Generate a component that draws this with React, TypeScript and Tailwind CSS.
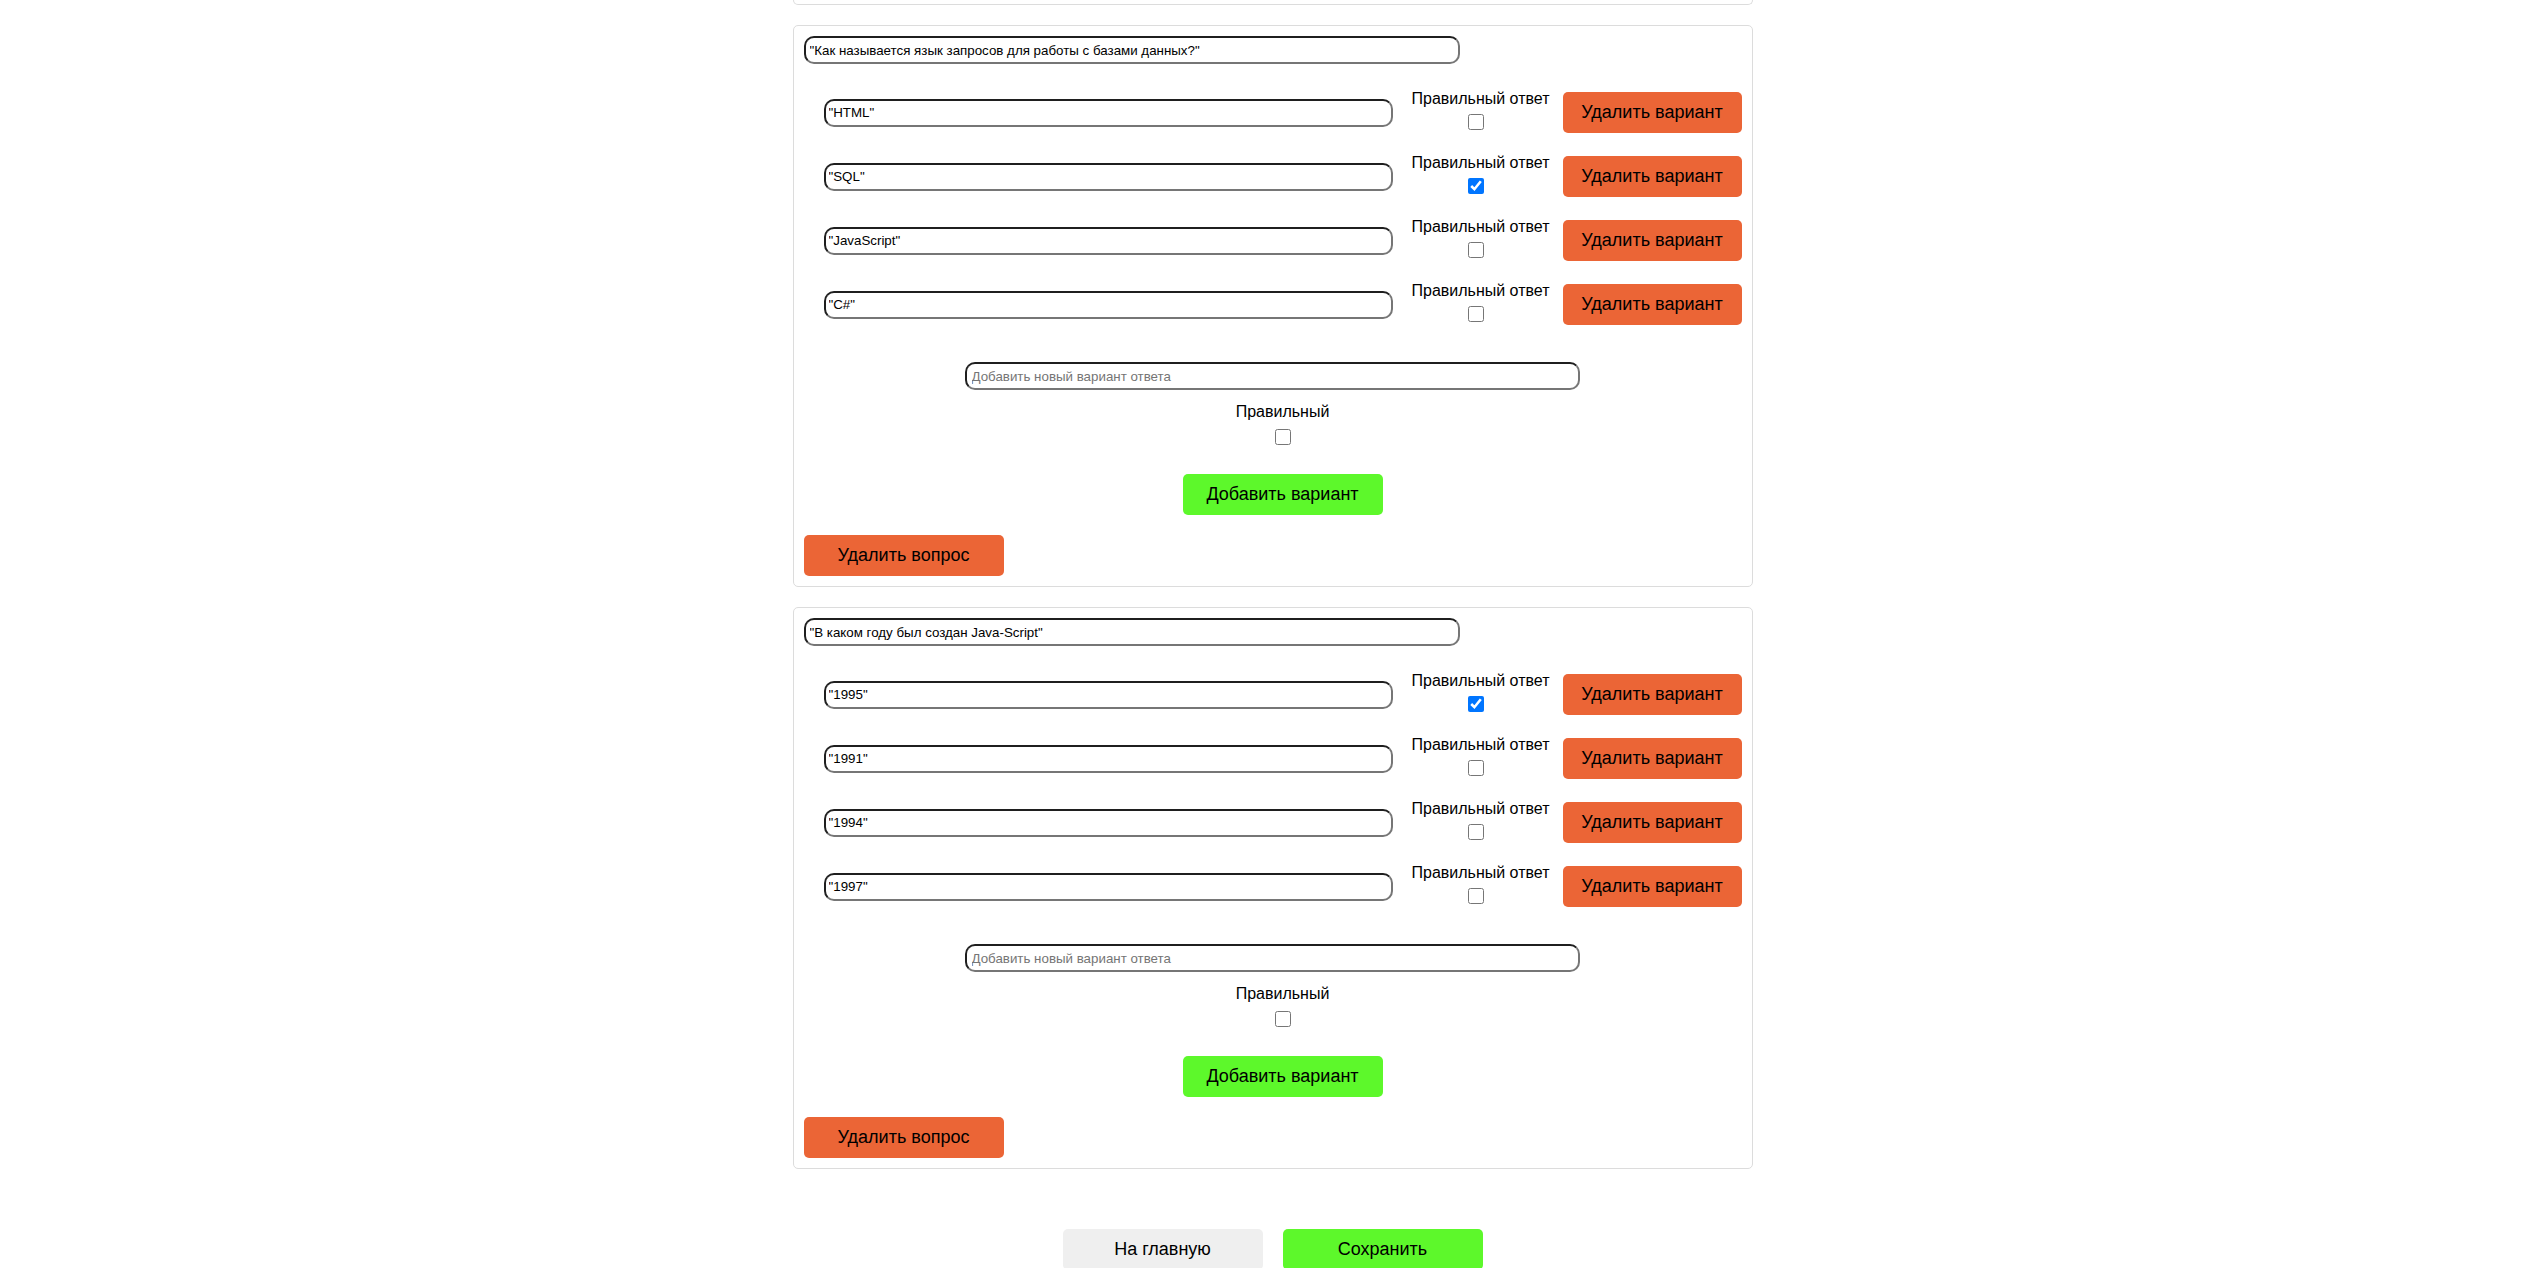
import { useState } from 'react'

type Variant = { text: string; correct: boolean }
type Question = { id: number; text: string; variants: Variant[] }

const start: Question[] = [
  {
    id: 1,
    text: '"Как называется язык запросов для работы с базами данных?"',
    variants: [
      { text: '"HTML"', correct: false },
      { text: '"SQL"', correct: true },
      { text: '"JavaScript"', correct: false },
      { text: '"C#"', correct: false },
    ],
  },
  {
    id: 2,
    text: '"В каком году был создан Java-Script"',
    variants: [
      { text: '"1995"', correct: true },
      { text: '"1991"', correct: false },
      { text: '"1994"', correct: false },
      { text: '"1997"', correct: false },
    ],
  },
]

const field =
  'h-[28px] rounded-[10px] border-2 border-t-[#1f1f1f] border-l-[#1f1f1f] border-b-[#767676] border-r-[#767676] bg-white text-[13.33px] text-black outline-none placeholder:text-[#757575]'

function QuestionCard({ q }: { q: Question }) {
  const [novyi, setNovyi] = useState('')
  return (
    <div className="rounded-[5px] border border-[#dcdcdc] p-[10px]">
      <input className={`${field} w-[656px] px-[4px]`} defaultValue={q.text} />

      <div className="mt-[28px] flex flex-col gap-[23px] pl-[20px]">
        {q.variants.map((v, i) => (
          <div key={i} className="flex h-[41px] items-center">
            <input className={`${field} w-[569px] px-[3px]`} defaultValue={v.text} />
            <div className="mb-[6px] ml-[6px] flex flex-1 flex-col items-center">
              <span className="whitespace-nowrap text-[16px] leading-[18px]">Правильный ответ</span>
              <input type="checkbox" defaultChecked={v.correct} className="mr-[10px] mt-[6px] h-4 w-4" />
            </div>
            <button className="h-[41px] w-[179px] rounded-[5px] bg-[#eb6536] text-[18px] text-black">Удалить вариант</button>
          </div>
        ))}
      </div>

      <div className="mt-[37px] flex flex-col items-center pl-[20px]">
        <input
          className={`${field} mr-[21px] w-[615px] px-[5px]`}
          placeholder="Добавить новый вариант ответа"
          value={novyi}
          onChange={(e) => setNovyi(e.target.value)}
        />
        <span className="mt-[13px] text-[16px] leading-[18px]">Правильный</span>
        <input type="checkbox" className="mt-[8px] h-4 w-4" />
        <button className="mt-[29px] h-[41px] w-[200px] rounded-[5px] bg-[#5df82b] text-[18px] text-black">Добавить вариант</button>
      </div>

      <button className="mt-[20px] h-[41px] w-[200px] rounded-[5px] bg-[#eb6536] text-[18px] text-black">Удалить вопрос</button>
    </div>
  )
}

export default function App() {
  return (
    <div className="h-[1268px] overflow-hidden bg-white text-black" style={{ fontFamily: '"Liberation Sans", Arial, sans-serif' }}>
      <div className="mx-auto w-[960px]">
        {/* хвост предыдущего вопроса, страница прокручена */}
        <div className="h-[5px] rounded-b-[5px] border-x border-b border-[#dcdcdc]" />
        <div className="mt-[20px] flex flex-col gap-[20px]">
          {start.map((q) => (
            <QuestionCard key={q.id} q={q} />
          ))}
        </div>
        <div className="mt-[60px] flex justify-center gap-[20px]">
          <button className="h-[41px] w-[200px] rounded-[5px] bg-[#efefef] text-[18px] text-black">На главную</button>
          <button className="h-[41px] w-[200px] rounded-[5px] bg-[#5df82b] text-[18px] text-black">Сохранить</button>
        </div>
      </div>
    </div>
  )
}
